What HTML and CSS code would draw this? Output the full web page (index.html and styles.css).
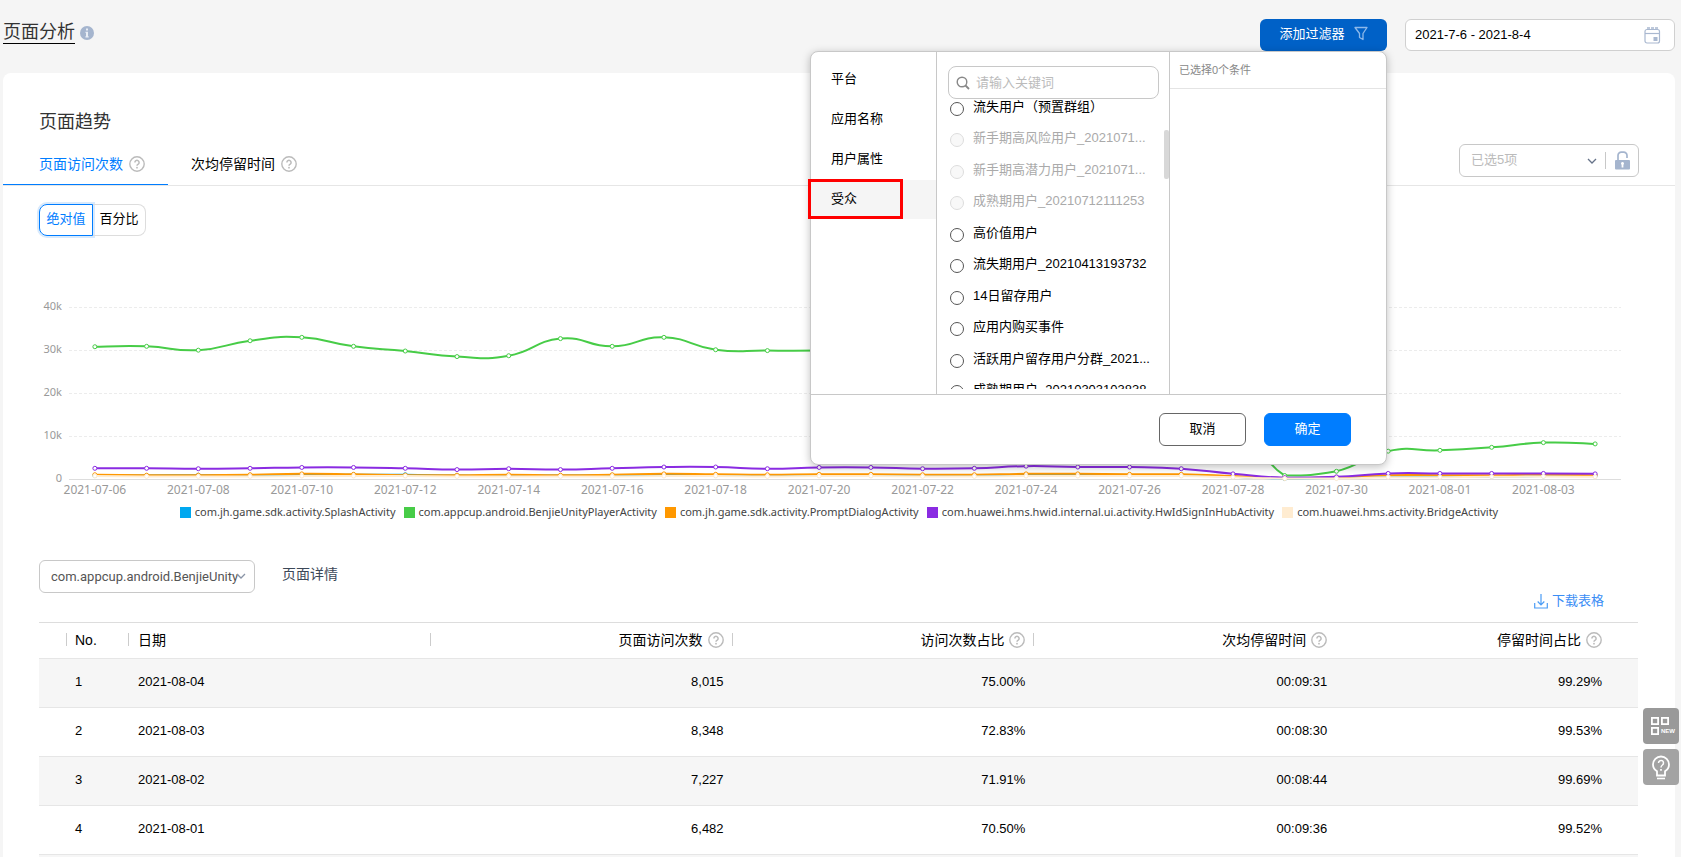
FILE: index.html
```html
<!DOCTYPE html>
<html lang="zh-CN">
<head>
<meta charset="utf-8">
<title>页面分析</title>
<link rel="stylesheet" href="styles.css">
</head>
<body>
<svg class="defs" width="0" height="0" aria-hidden="true">
  <symbol id="help" viewBox="0 0 16 16">
    <circle cx="8" cy="8" r="7.2" fill="none" stroke="currentColor" stroke-width="1.400"/>
    <path d="M5.9 6.5a2.1 2.1 0 1 1 3.3 1.7C8.400 8.700 8 9 8 9.800" fill="none" stroke="currentColor" stroke-width="1.500"/>
    <circle cx="8" cy="11.700" r=".9" fill="currentColor"/>
  </symbol>
  <symbol id="chevron" viewBox="0 0 10 6">
    <path d="M1 1l4 4 4-4" fill="none" stroke="currentColor" stroke-width="1.300"/>
  </symbol>
</svg>

<header class="topbar">
  <h1 class="page-title">页面分析</h1>
  <svg class="info" viewBox="0 0 14 14"><circle cx="7" cy="7" r="7" fill="#a5b5ce"/><path d="M6 2.500h2v2H6zM5.500 5.800H8v4.400h.7v1.200H5.400v-1.200H6V7h-.5z" fill="#e9eef5"/></svg>

  <div class="filter">
    <button class="filter-button" type="button">添加过滤器
      <svg width="14" height="16" viewBox="0 0 14 16"><path d="M1 1.500h12L9 7.500v6l-3.500-2v-4z" fill="none" stroke="#8db9ea" stroke-width="1.300" stroke-linejoin="round"/></svg>
    </button>

    <section class="popup">
      <div class="popup-body">
        <nav class="categories">
          <button type="button" class="category">平台</button>
          <button type="button" class="category">应用名称</button>
          <button type="button" class="category">用户属性</button>
          <button type="button" class="category category-active">受众</button>
        </nav>
        <div class="audience">
          <label class="search">
            <svg width="14" height="14" viewBox="0 0 14 14"><circle cx="6" cy="6" r="4.800" fill="none" stroke="#888" stroke-width="1.400"/><path d="M9.500 9.500l3.500 3.500" stroke="#888" stroke-width="1.800"/></svg>
            <input type="text" placeholder="请输入关键词" aria-label="请输入关键词">
          </label>
          <div class="options">
            <div class="option-list">
              <label class="option"><input type="radio" name="audience"><span>流失用户（预置群组）</span></label>
              <label class="option"><input type="radio" name="audience" disabled><span>新手期高风险用户_2021071...</span></label>
              <label class="option"><input type="radio" name="audience" disabled><span>新手期高潜力用户_2021071...</span></label>
              <label class="option"><input type="radio" name="audience" disabled><span>成熟期用户_20210712111253</span></label>
              <label class="option"><input type="radio" name="audience"><span>高价值用户</span></label>
              <label class="option"><input type="radio" name="audience"><span>流失期用户_20210413193732</span></label>
              <label class="option"><input type="radio" name="audience"><span>14日留存用户</span></label>
              <label class="option"><input type="radio" name="audience"><span>应用内购买事件</span></label>
              <label class="option"><input type="radio" name="audience"><span>活跃用户留存用户分群_2021...</span></label>
              <label class="option"><input type="radio" name="audience"><span>成熟期用户_20210303103838</span></label>
            </div>
          </div>
          <i class="scroll-thumb"></i>
        </div>
        <div class="chosen"><p class="chosen-title">已选择0个条件</p></div>
      </div>
      <footer class="popup-footer">
        <button type="button" class="btn">取消</button>
        <button type="button" class="btn btn-primary">确定</button>
      </footer>
    </section>
  </div>

  <label class="date">
    <input type="text" value="2021-7-6 - 2021-8-4" aria-label="日期范围">
    <svg width="17" height="17" viewBox="0 0 17 17" fill="none" stroke="#a9b8d0"><rect x="1" y="2.500" width="14.500" height="13.500" rx="2" stroke-width="1.200"/><path d="M1 6.500h14.500" stroke-width="1.200"/><path d="M3 1h3M7 1h3M11 1h3" stroke-width="1.600"/><rect x="10" y="10.500" width="3" height="3" fill="#a9b8d0"/></svg>
  </label>
</header>

<main class="card">
  <h2 class="card-title">页面趋势</h2>
  <div class="tabs">
    <button type="button" class="tab tab-active">页面访问次数<svg class="help"><use href="#help"/></svg></button>
    <button type="button" class="tab">次均停留时间<svg class="help"><use href="#help"/></svg></button>
    <div class="series-pick">
      <select disabled aria-label="已选项"><option>已选5项</option></select>
      <svg class="chevron"><use href="#chevron"/></svg>
      <button type="button" class="lock" aria-label="解锁">
        <svg width="15" height="19" viewBox="0 0 15 19"><path d="M3 9V4.500a3.300 3.300 0 0 1 3.300-3.300h2.400A3.300 3.300 0 0 1 12 4.500V7" fill="none" stroke="#a5b5ce" stroke-width="1.700"/><rect y="9" width="15" height="9.500" rx="1" fill="#a5b5ce"/><path d="M7.500 11a1.500 1.500 0 0 1 .9 2.700V16.500H6.600v-2.800A1.500 1.500 0 0 1 7.500 11z" fill="#fff"/></svg>
      </button>
    </div>
  </div>

  <div class="segment">
    <button type="button" class="seg seg-active">绝对值</button><button type="button" class="seg">百分比</button>
  </div>

  <svg id="chart" class="chart" role="img" aria-label="页面访问次数趋势"></svg>
  <ul class="legend">
    <li><i class="c-splash"></i>com.jh.game.sdk.activity.SplashActivity</li>
    <li><i class="c-unity"></i>com.appcup.android.BenjieUnityPlayerActivity</li>
    <li><i class="c-prompt"></i>com.jh.game.sdk.activity.PromptDialogActivity</li>
    <li><i class="c-hub"></i>com.huawei.hms.hwid.internal.ui.activity.HwIdSignInHubActivity</li>
    <li><i class="c-bridge"></i>com.huawei.hms.activity.BridgeActivity</li>
  </ul>

  <div class="toolbar">
    <div class="page-pick">
      <select id="page-select" aria-label="页面"><option>com.appcup.android.BenjieUnity</option></select>
      <svg class="chevron"><use href="#chevron"/></svg>
    </div>
    <label class="detail-title" for="page-select">页面详情</label>
    <a class="download" href="#"><svg width="14" height="15" viewBox="0 0 14 15" fill="none" stroke="#4a9cf5"><path d="M.7 9v5h12.600V9M7 0v10.500M3.700 7.500L7 10.800l3.300-3.300" stroke-width="1.200"/></svg>下载表格</a>
  </div>

  <table class="data">
    <colgroup><col class="col-pad"><col class="col-no"><col><col><col><col><col></colgroup>
    <thead>
      <tr>
        <th class="sep"></th>
        <th class="sep">No.</th>
        <th class="sep">日期</th>
        <th class="sep num"><span>页面访问次数<svg class="help"><use href="#help"/></svg></span></th>
        <th class="sep num"><span>访问次数占比<svg class="help"><use href="#help"/></svg></span></th>
        <th class="num"><span>次均停留时间<svg class="help"><use href="#help"/></svg></span></th>
        <th class="num"><span>停留时间占比<svg class="help"><use href="#help"/></svg></span></th>
      </tr>
    </thead>
    <tbody>
      <tr><td></td><td>1</td><td>2021-08-04</td><td class="num">8,015</td><td class="num">75.00%</td><td class="num">00:09:31</td><td class="num">99.29%</td></tr>
      <tr><td></td><td>2</td><td>2021-08-03</td><td class="num">8,348</td><td class="num">72.83%</td><td class="num">00:08:30</td><td class="num">99.53%</td></tr>
      <tr><td></td><td>3</td><td>2021-08-02</td><td class="num">7,227</td><td class="num">71.91%</td><td class="num">00:08:44</td><td class="num">99.69%</td></tr>
      <tr><td></td><td>4</td><td>2021-08-01</td><td class="num">6,482</td><td class="num">70.50%</td><td class="num">00:09:36</td><td class="num">99.52%</td></tr>
      <tr><td></td><td></td><td></td><td></td><td></td><td></td><td></td></tr>
    </tbody>
  </table>
</main>

<aside class="floaters">
  <button type="button" class="floater" aria-label="新功能">
    <svg width="36" height="36" viewBox="0 0 36 36"><g fill="none" stroke="#fff" stroke-width="1.800"><rect x="8.900" y="9.900" width="6.200" height="6.200"/><rect x="18.900" y="9.900" width="6.200" height="6.200"/><rect x="8.900" y="19.900" width="6.200" height="6.200"/></g><text x="18" y="25" class="new-tag">NEW</text></svg>
  </button>
  <button type="button" class="floater floater-light" aria-label="帮助">
    <svg width="36" height="36" viewBox="0 0 36 36" fill="none" stroke="#fff" stroke-width="1.800"><path d="M14 26.500v-4.200c-2.500-1.600-4-4-4-6.800a8 8 0 0 1 16 0c0 2.800-1.500 5.200-4 6.800v4.200z"/><path d="M14 29.500h8" stroke-width="1.600"/><path d="M15.500 14a2.500 2.500 0 1 1 3.900 2C18.400 16.700 18 17.200 18 18.500" stroke-width="1.500"/><path d="M18 20v1.800" stroke-width="1.700"/></svg>
  </button>
</aside>
<script src="chart.js"></script>
</body>
</html>
```

FILE: styles.css
```css
*, *::before, *::after { box-sizing: border-box; }
html, body { height: 100%; margin: 0; }
body {
  display: flex;
  flex-direction: column;
  overflow: hidden;
  padding: 0 6px 0 3px;
  background: #f5f5f5;
  color: #000;
  font: 13px/20px "Liberation Sans", "Noto Sans CJK SC", sans-serif;
}
button, input, select { font: inherit; color: inherit; margin: 0; }
button { padding: 0; border: 0; background: none; cursor: pointer; }
h1, h2, p, ul { margin: 0; padding: 0; font-weight: normal; }
svg { flex: none; }
.defs { position: absolute; }

.topbar { display: flex; flex: none; height: 73px; padding-top: 19px; align-items: flex-start; }
.page-title { height: 25px; border-bottom: 1px solid #000; color: #333; font-size: 18px; line-height: 26px; }
.info { width: 14px; height: 14px; margin: 7px auto 0 5px; }

.filter { position: relative; }
.filter-button {
  display: flex;
  align-items: center;
  justify-content: center;
  gap: 9px;
  width: 127px;
  height: 32px;
  padding-bottom: 2px;
  border-radius: 6px;
  background: #0061c7;
  color: #fff;
}
.date {
  display: flex;
  align-items: center;
  width: 270px;
  height: 32px;
  margin-left: 18px;
  padding: 0 13px 0 9px;
  border: 1px solid #d0d0d0;
  border-radius: 6px;
  background: #fff;
}
.date input { flex: 1; min-width: 0; padding: 0; border: 0; outline: 0; background: none; }

.popup {
  position: absolute;
  z-index: 5;
  top: 100%;
  right: 0;
  width: 577px;
  border: 1px solid #c8c8c8;
  border-radius: 8px;
  background: #fff;
  box-shadow: 0 2px 8px rgba(0, 0, 0, .25);
}
.popup-body { display: flex; height: 343px; border-bottom: 1px solid #c8c8c8; }
.categories { width: 126px; padding-top: 8px; border-right: 1px solid #c8c8c8; }
.category { display: block; position: relative; width: 100%; height: 40px; padding: 0 0 2px 20px; text-align: left; }
.category-active { height: 39px; background: #f5f5f5; }
.category-active::after {
  content: "";
  position: absolute;
  top: -1px;
  left: -3px;
  width: 95px;
  height: 40px;
  border: 3px solid #f00;
}
.audience { position: relative; width: 233px; padding: 14px 10px 5px 11px; border-right: 1px solid #c8c8c8; }
.search {
  display: flex;
  align-items: center;
  gap: 6px;
  height: 33px;
  padding: 0 7px;
  border: 1px solid #c8c8c8;
  border-radius: 8px;
}
.search input { flex: 1; min-width: 0; padding: 0; border: 0; outline: 0; }
.search input::placeholder { color: #bbb; }
.options { height: 290px; overflow: hidden; }
.option-list { display: grid; grid-auto-rows: 1fr; height: 315px; margin-top: -6px; }
.option { display: flex; align-items: center; gap: 9px; padding-left: 2px; white-space: nowrap; }
.option span { padding-bottom: 4px; }
.option input {
  appearance: none;
  flex: none;
  width: 14px;
  height: 14px;
  border: 1px solid #555;
  border-radius: 50%;
}
.option input:disabled { border-color: #ddd; background: #f8f8f8; }
.option input:disabled + span { color: #aaa; }
.scroll-thumb { position: absolute; top: 78px; right: 0; width: 5px; height: 49px; border-radius: 2px; background: #d8d8d8; }
.chosen { flex: 1; }
.chosen-title { height: 37px; padding-left: 9px; border-bottom: 1px solid #e4e4e4; color: #888; font-size: 11px; line-height: 36px; }
.popup-footer { display: flex; justify-content: flex-end; gap: 18px; padding: 18px 35px 18px 0; }
.btn { width: 87px; height: 33px; padding-bottom: 2px; border: 1px solid #666; border-radius: 6px; }
.btn-primary { border-color: #007dff; background: #007dff; color: #fff; }

.card { flex: 1; min-height: 0; overflow: hidden; padding-top: 36px; border-radius: 8px 8px 0 0; background: #fff; }
.card-title { padding-left: 36px; color: #333; font-size: 18px; line-height: 26px; }
.tabs { display: flex; height: 43px; margin-top: 8px; padding-right: 36px; border-bottom: 1px solid #e6e6e6; }
.tab { display: flex; align-items: center; gap: 6px; height: 42px; padding: 0 23px; font-size: 14px; }
.tab-active { padding-left: 36px; border-bottom: 1px solid #007dff; color: #007dff; }
.help { width: 16px; height: 16px; color: #bbb; }
.chevron { width: 10px; height: 6px; color: #8a94a6; pointer-events: none; }

.series-pick {
  display: flex;
  align-items: center;
  width: 180px;
  height: 33px;
  margin: 1px 0 0 auto;
  padding-left: 11px;
  border: 1px solid #c8c8c8;
  border-radius: 6px;
}
.series-pick select { appearance: none; flex: 1; padding: 0 0 2px; border: 0; background: none; color: #bbb; opacity: 1; }
.series-pick .chevron { color: #667389; }
.lock { display: flex; align-items: center; height: 17px; margin: 0 8px 0 8px; padding-left: 9px; border-left: 1px solid #c8c8c8; }

.segment { display: flex; margin: 18px 0 0 36px; }
.seg { width: 53px; height: 32px; padding-bottom: 2px; border: 1px solid #ddd; border-left: 0; border-radius: 0 8px 8px 0; }
.seg-active {
  width: 54px;
  border: 1px solid #007dff;
  border-radius: 8px 0 0 8px;
  color: #007dff;
  box-shadow: 0 0 0 2px #d9eafc;
}

.chart { display: block; width: 100%; height: 264px; font: 12px "Noto Sans", sans-serif; }
.chart text { fill: #999; text-anchor: middle; }
.chart .y-label { font-size: 11px; text-anchor: end; }
.grid { stroke: #ececec; stroke-dasharray: 3 2; }
.axis { stroke: #ddd; }
.line { fill: none; stroke-width: 2; }
.dot { fill: #fff; stroke-width: 1; }

.legend {
  display: flex;
  justify-content: center;
  gap: 8px;
  margin-top: 3px;
  color: #444;
  font: 11px/18px "Noto Sans", sans-serif;
  list-style: none;
  white-space: nowrap;
}
.legend li { display: flex; align-items: center; gap: 4px; }
.legend i { width: 11px; height: 11px; }
.c-splash { background: #00a8f0; }
.c-unity { background: #47cc47; }
.c-prompt { background: #ff9800; }
.c-hub { background: #8a2be2; }
.c-bridge { background: #ffecd1; }

.toolbar { display: flex; height: 49px; margin-top: 39px; padding: 0 71px 0 36px; }
.page-pick { position: relative; width: 216px; height: 33px; }
.page-pick select {
  appearance: none;
  width: 100%;
  height: 100%;
  padding: 1px 0 0 11px;
  border: 1px solid #c8c8c8;
  border-radius: 6px;
  background: #fff;
  color: #555;
  font-family: Roboto, sans-serif;
}
.page-pick .chevron { position: absolute; top: 13px; right: 9px; }
.detail-title { margin-left: 27px; color: #3c4858; font-size: 14px; line-height: 28px; }
.download { display: flex; align-items: flex-end; gap: 4px; margin-left: auto; color: #3a8df5; line-height: 17px; text-decoration: none; }

.data { width: calc(100% - 73px); margin: 13px 37px 0 36px; border-collapse: separate; border-spacing: 0; table-layout: fixed; }
.col-pad { width: 28px; }
.col-no { width: 62px; }
.data th, .data td { padding: 0 0 2px 8px; border-bottom: 1px solid #e6e6e6; text-align: left; }
.data th { position: relative; height: 37px; border-top: 1px solid #ddd; font-size: 14px; font-weight: normal; }
.data td { height: 49px; }
.data .num { padding-right: 9px; text-align: right; }
.data .num:last-child { padding-right: 36px; }
.data tr > :nth-child(3) { padding-left: 9px; }
.data th span { display: inline-flex; align-items: center; gap: 5px; }
.sep::after { content: ""; position: absolute; top: 10px; right: 0; height: 13px; border-right: 1px solid #ccc; }
.data tbody tr:nth-child(odd) { background: #f6f6f6; }

.floaters { position: fixed; top: 708px; right: 2px; display: grid; gap: 5px; }
.floater { width: 36px; height: 36px; border-radius: 4px; background: #999; }
.floater-light { background: #a3a3a3; }
.floater svg { display: block; }
.new-tag { fill: #fff; font: bold 6px "Liberation Sans", sans-serif; }
```

FILE: chart.js
```js
const NS = "http://www.w3.org/2000/svg";
const svg = document.getElementById("chart");

// Visits per day in thousands, 2021-07-06 to 2021-08-04.
const series = [
  { color: "#00a8f0", values: [0.8,0.8,0.9,0.9,1,1,1,0.8,0.8,0.8,0.9,1,0.9,0.8,0.9,0.9,0.8,0.8,1,1,0.9,0.9,0.5,0.1,0.3,0.6,0.6,0.6,0.7,0.7] },
  { color: "#47cc47", values: [30.9,31,30.1,32.3,33.1,31,29.9,28.6,28.8,32.8,31,33.1,30.2,30,30,30.3,30.5,30.8,30.6,30,29.5,28,17,0.8,1.8,6.5,6.7,7.4,8.5,8.2] },
  { color: "#ff9800", values: [1,0.9,0.9,1,1.2,1.1,0.9,0.9,1,0.9,1,1.2,1.1,1,1.1,1.1,1,1,1.2,1.2,1.1,1.1,0.7,0.2,0.4,0.9,0.9,0.9,1,0.9] },
  { color: "#8a2be2", values: [2.5,2.5,2.4,2.5,2.7,2.7,2.5,2.2,2.4,2.2,2.5,2.8,2.8,2.4,2.7,2.7,2.4,2.5,3,2.8,2.8,2.4,1.2,0.3,0.5,1.3,1.3,1.3,1.3,1.2] },
  { color: "#ffecd1", values: [0.7,0.6,0.6,0.6,0.7,0.7,0.7,0.6,0.6,0.6,0.6,0.7,0.7,0.6,0.7,0.7,0.6,0.6,0.7,0.7,0.7,0.7,0.4,0.1,0.1,0.4,0.4,0.5,0.6,0.5] }
];

function add(name, attrs, text) {
  const el = document.createElementNS(NS, name);
  for (const key in attrs) el.setAttribute(key, attrs[key]);
  if (text) el.textContent = text;
  svg.appendChild(el);
}

// The curve never dips below the lowest value of its series.
function smooth(points) {
  const floor = Math.max(...points.map((p) => p[1]));
  let d = `M${points[0]}`;
  for (let i = 0; i < points.length - 1; i++) {
    const a = points[Math.max(i - 1, 0)], b = points[i];
    const c = points[i + 1], e = points[Math.min(i + 2, points.length - 1)];
    const y1 = Math.min(b[1] + (c[1] - a[1]) / 4, floor);
    const y2 = Math.min(c[1] - (e[1] - b[1]) / 4, floor);
    d += `C${b[0] + (c[0] - a[0]) / 4},${y1} ${c[0] - (e[0] - b[0]) / 4},${y2} ${c}`;
  }
  return d;
}

function draw() {
  svg.replaceChildren();
  const left = 66, right = svg.clientWidth - 54, base = 243, unit = 4.28;
  const step = (right - left) / 30;
  for (let k = 0; k <= 40; k += 10) {
    const y = Math.floor(base - k * unit) + 0.5;
    add("line", { x1: left, x2: right, y1: y, y2: y, class: k ? "grid" : "axis" });
    add("text", { x: 59, y: y + 2, class: "y-label" }, k ? k + "k" : "0");
  }
  const start = Date.UTC(2021, 6, 6);
  for (let i = 0; i < 30; i += 2) {
    const day = new Date(start + i * 86400000).toISOString().slice(0, 10);
    add("text", { x: left + step * (i + 0.5), y: 258 }, day);
  }
  for (const s of series) {
    const points = s.values.map((v, i) => [left + step * (i + 0.5), base - v * unit]);
    add("path", { d: smooth(points), class: "line", stroke: s.color });
    for (const p of points) add("circle", { cx: p[0], cy: p[1], r: 2, class: "dot", stroke: s.color });
  }
}

draw();
addEventListener("resize", draw);
```
